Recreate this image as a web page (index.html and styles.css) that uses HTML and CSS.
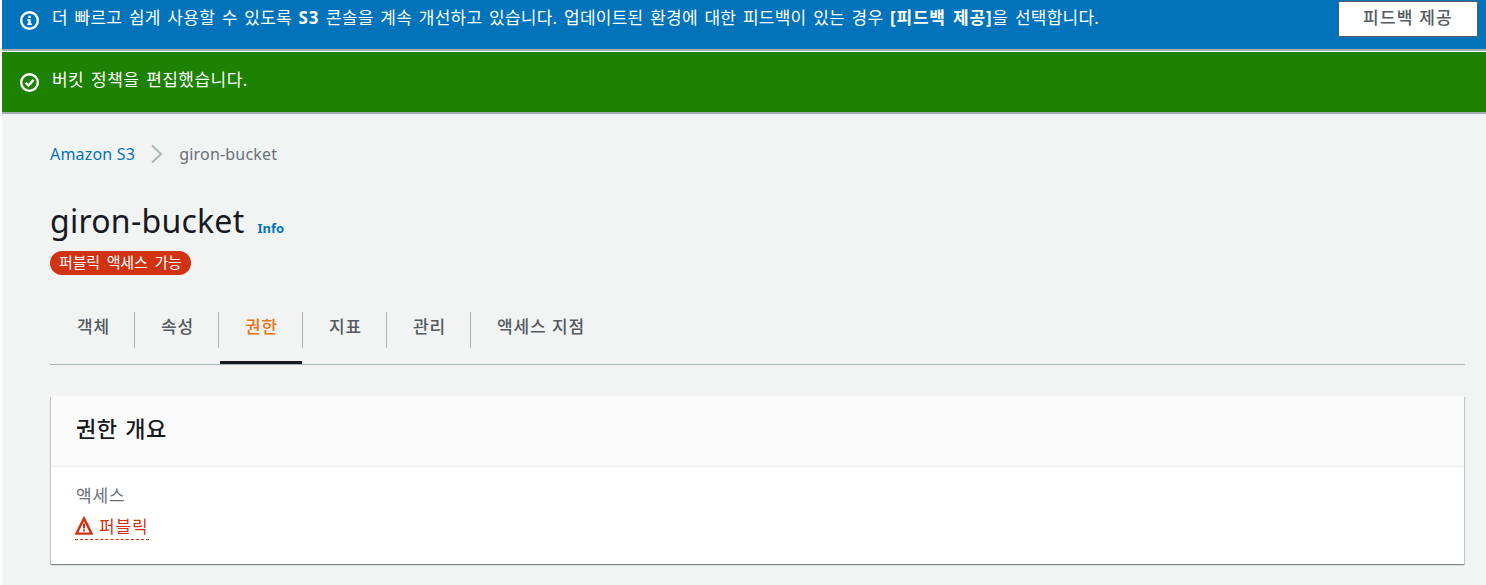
FILE: index.html
```html
<!DOCTYPE html>
<html lang="ko">
  <head>
    <meta charset="UTF-8">
    <title>giron-bucket - S3</title>
    <link rel="stylesheet" href="styles.css">
  </head>
  <body>
    <div class="flash flash-info">
      <svg class="flash-icon" viewBox="0 0 16 16" width="19" height="19">
        <circle cx="8" cy="8" r="7" fill="none" stroke="#fff" stroke-width="2"/>
        <rect x="7" y="7" width="2" height="4.5" fill="#fff"/>
        <rect x="6" y="10.5" width="4" height="1.2" fill="#fff"/>
        <rect x="6" y="7" width="2" height="1.2" fill="#fff"/>
        <rect x="7" y="4" width="2" height="2" fill="#fff"/>
      </svg>
      <p class="flash-text">더 빠르고 쉽게 사용할 수 있도록 <b>S3</b> 콘솔을 계속 개선하고 있습니다. 업데이트된 환경에 대한 피드백이 있는 경우 <b>[피드백 제공]</b>을 선택합니다.</p>
      <button class="flash-btn">피드백 제공</button>
    </div>
    <div class="flash flash-success">
      <svg class="flash-icon" viewBox="0 0 16 16" width="19" height="19">
        <circle cx="8" cy="8" r="7" fill="none" stroke="#fff" stroke-width="2"/>
        <path d="M4.7 8.2 7.2 10.6 11.4 5.8" fill="none" stroke="#fff" stroke-width="2"/>
      </svg>
      <p class="flash-text">버킷 정책을 편집했습니다.</p>
    </div>
    <main>
      <nav class="crumbs">
        <a href="#">Amazon S3</a>
        <svg viewBox="0 0 14 20" width="14" height="20">
          <path d="M2 1.5 11 10 2 18.5" fill="none" stroke="#aab7b8" stroke-width="2"/>
        </svg>
        <span>giron-bucket</span>
      </nav>
      <div class="title-row">
        <h1>giron-bucket</h1>
        <a class="info" href="#">Info</a>
      </div>
      <span class="badge">퍼블릭 액세스 가능</span>
      <ul class="tabs">
        <li>객체</li>
        <li>속성</li>
        <li class="active">권한</li>
        <li>지표</li>
        <li>관리</li>
        <li>액세스 지점</li>
      </ul>
      <section class="card">
        <h2>권한 개요</h2>
        <div class="card-body">
          <div class="label">액세스</div>
          <span class="status">
            <svg viewBox="0 0 18 19" width="18" height="19">
              <path d="M9 2.4 16.6 17.6H1.4Z" fill="none" stroke="#d13212" stroke-width="2.4"/>
              <rect x="8" y="7.4" width="2" height="5" fill="#d13212"/>
              <rect x="8" y="13.4" width="2" height="2" fill="#d13212"/>
            </svg>퍼블릭</span>
        </div>
      </section>
    </main>
  </body>
</html>
```

FILE: styles.css
```css
*{
  box-sizing: border-box;
}
html, body{
  margin: 0;
  padding: 0;
  height: 100%;
}
body{
  background: #fff;
  padding-left: 2px;
  font-family: "Noto Sans", "Noto Sans CJK KR", sans-serif;
  font-size: 14px;
  overflow: hidden;
}

/* flash banners */
.flash{
  display: flex;
  align-items: flex-start;
  color: #fff;
  padding-left: 18px;
  border-bottom: 2px solid #a5adb0;
}
.flash-info{
  height: 51px;
  background: #0073bb;
  margin-bottom: 1px;
  padding-top: 10px;
  padding-right: 8px;
}
.flash-success{
  height: 62px;
  background: #1d8102;
  padding-top: 20px;
}
.flash-success .flash-text{
  letter-spacing: 0.45px;
}
.flash-icon{
  flex: none;
  margin-top: 1px;
}
.flash-text{
  flex: 1;
  margin: -2px 0 0 13px;
  font-size: 17px;
  line-height: 20px;
  letter-spacing: 0.25px;
  word-spacing: 2px;
}
.flash-text b{
  letter-spacing: 0.8px;
}
.flash-btn{
  width: 140px;
  height: 36px;
  margin-top: -9px;
  padding: 0 0 3px;
  background: #fff;
  color: #545b64;
  border: 1px solid #545b64;
  border-radius: 2px;
  font: 500 17px/20px "Noto Sans", "Noto Sans CJK KR", sans-serif;
  letter-spacing: 1.2px;
}

main{
  height: 471px;
  background: #f2f3f3;
  padding: 28px 21px 0 48px;
}

/* breadcrumbs */
.crumbs{
  display: flex;
  align-items: center;
  gap: 15px;
  height: 24px;
  font-size: 16px;
  letter-spacing: 0.2px;
  color: #687078;
}
.crumbs a{
  color: #0073bb;
  text-decoration: none;
}

.title-row{
  display: flex;
  align-items: baseline;
  gap: 13px;
  margin-top: 32px;
  height: 46px;
}
h1{
  margin: 0;
  font-size: 32px;
  line-height: 46px;
  font-weight: 400;
  letter-spacing: 0.25px;
  color: #16191f;
}
.info{
  color: #0073bb;
  font-size: 13px;
  font-weight: 700;
  text-decoration: none;
}
.badge{
  display: inline-block;
  height: 24px;
  margin-top: 7px;
  padding: 0 9px;
  background: #d13212;
  color: #fff;
  border-radius: 12px;
  font-size: 15px;
  line-height: 23px;
  letter-spacing: -0.15px;
  word-spacing: 3px;
  vertical-align: top;
}

/* tabs */
.tabs{
  display: flex;
  list-style: none;
  margin: 20px 0 0;
  padding: 0;
  height: 70px;
  border-bottom: 1px solid #aab7b8;
}
.tabs li{
  position: relative;
  width: 84px;
  padding: 20px 0 0 26px;
  font-size: 17px;
  line-height: 24px;
  font-weight: 500;
  letter-spacing: 0.9px;
  color: #545b64;
}
.tabs li:first-child{
  width: 85px;
  padding-left: 27px;
}
.tabs li:last-child{
  width: auto;
}
.tabs li:not(:last-child)::after{
  content: "";
  position: absolute;
  top: 17px;
  right: 0;
  height: 36px;
  border-right: 1px solid #aab7b8;
}
.tabs .active{
  color: #ec7211;
}
.tabs .active::before{
  content: "";
  position: absolute;
  left: 1px;
  right: 1px;
  bottom: 0;
  height: 3px;
  background: #16191f;
}

/* permissions card */
.card{
  height: 168px;
  margin: 31px 1px 0;
  background: #fff;
  box-shadow: 0 1px 1px 0 rgba(0, 28, 36, 0.3), 1px 1px 1px 0 rgba(0, 28, 36, 0.15), -1px 1px 1px 0 rgba(0, 28, 36, 0.15);
}
.card h2{
  margin: 0;
  height: 71px;
  padding: 16px 25px 0;
  background: #fafafa;
  border-bottom: 1px solid #eaeded;
  font-size: 22px;
  line-height: 32px;
  font-weight: 500;
  letter-spacing: 0.5px;
  word-spacing: 1.5px;
  color: #16191f;
}
.card-body{
  padding: 18px 24px 0;
}
.label{
  padding-left: 1px;
  font-size: 17px;
  line-height: 22px;
  letter-spacing: 0.9px;
  color: #687078;
}
.status{
  display: inline-flex;
  align-items: center;
  gap: 6px;
  height: 31px;
  margin-top: 2px;
  padding-top: 2px;
  font-size: 17px;
  letter-spacing: 0.9px;
  color: #d13212;
  border-bottom: 1px dashed #d13212;
}
```
